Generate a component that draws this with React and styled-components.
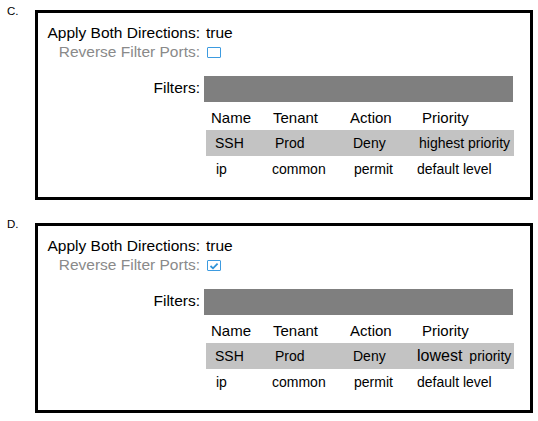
import React from "react";
import styled, { createGlobalStyle } from "styled-components";

const GlobalStyle = createGlobalStyle`
  body {
    margin: 0;
    background: #fff;
    font-family: "Liberation Sans", Arial, sans-serif;
    color: #000;
  }
`;

const options = [
  {
    letter: "C.",
    checked: false,
    rows: [
      { bg: "#c3c3c3", cells: [["SSH", 9], ["Prod", 7], ["Deny", 8], ["highest priority", 7]] },
      { bg: "transparent", cells: [["ip", 10], ["common", 4], ["permit", 9], ["default level", 5]] },
    ],
  },
  {
    letter: "D.",
    checked: true,
    rows: [
      { bg: "#c3c3c3", cells: [["SSH", 9], ["Prod", 7], ["Deny", 8], ["lowest", 5]] },
      { bg: "transparent", cells: [["ip", 10], ["common", 4], ["permit", 9], ["default level", 5]] },
    ],
  },
];

const headers = [
  ["Name", 5],
  ["Tenant", 5],
  ["Action", 5],
  ["Priority", 10],
];

function Checkbox({ checked }) {
  return (
    <CheckBoxStyle>
      {checked && (
        <svg width="10" height="8" viewBox="0 0 10 8">
          <path d="M1.5 4 L4 6.3 L8.6 1.6" fill="none" stroke="#2f93d8" strokeWidth="1.8" />
        </svg>
      )}
    </CheckBoxStyle>
  );
}

function PriorityText({ text }) {
  if (text === "lowest") {
    return (
      <>
        <Big>lowest</Big>priority
      </>
    );
  }
  return text;
}

function Option({ option }) {
  return (
    <Section>
      <Letter>{option.letter}</Letter>
      <Box>
        <Form>
          <Label>Apply Both Directions:</Label>
          <Value>true</Value>
          <Label $muted>Reverse Filter Ports:</Label>
          <Value>
            <Checkbox checked={option.checked} />
          </Value>
          <FilterLabel>Filters:</FilterLabel>
          <FilterBar />
          <Spacer />
          <Table>
            {headers.map(([text, indent]) => (
              <HeadCell key={text} $indent={indent}>
                {text}
              </HeadCell>
            ))}
            {option.rows.map((row, i) =>
              row.cells.map(([text, indent], j) => (
                <Cell key={`${i}-${j}`} $indent={indent} $bg={row.bg}>
                  <PriorityText text={text} />
                </Cell>
              ))
            )}
          </Table>
        </Form>
      </Box>
    </Section>
  );
}

export default function App() {
  return (
    <Page>
      <GlobalStyle />
      {options.map((o) => (
        <Option key={o.letter} option={o} />
      ))}
    </Page>
  );
}

const Page = styled.div`
  padding-top: 5px;
  display: flex;
  flex-direction: column;
  gap: 18px;
`;

const Section = styled.div`
  display: flex;
  align-items: flex-start;
`;

const Letter = styled.div`
  width: 35px;
  box-sizing: border-box;
  padding-left: 7px;
  font-size: 11.5px;
  line-height: 12px;
`;

const Box = styled.div`
  margin-top: 5px;
  width: 498px;
  box-sizing: border-box;
  border: 3px solid #000;
  padding: 10px 0 15px 7px;
`;

const Form = styled.div`
  display: grid;
  grid-template-columns: 155px 1fr;
  column-gap: 4px;
  font-size: 15.5px;
`;

const Label = styled.div`
  justify-self: end;
  line-height: 19px;
  white-space: nowrap;
  color: ${(p) => (p.$muted ? "#8a8a8a" : "#000")};
`;

const Value = styled.div`
  display: flex;
  align-items: center;
  line-height: 19px;
  padding-left: 2px;
`;

const CheckBoxStyle = styled.span`
  display: flex;
  align-items: center;
  justify-content: center;
  width: 14px;
  height: 11px;
  margin-left: 1px;
  margin-top: 2px;
  box-sizing: border-box;
  border: 1.5px solid #3d9be0;
  border-radius: 1px;
  background: #fff;
`;

const FilterLabel = styled(Label)`
  align-self: center;
  margin-top: 14px;
  padding-bottom: 2px;
`;

const FilterBar = styled.div`
  margin-top: 15px;
  width: 309px;
  height: 26px;
  background: #7f7f7f;
`;

const Spacer = styled.div``;

const Table = styled.div`
  display: grid;
  grid-template-columns: 62px 77px 67px 102px;
  margin-left: 2px;
`;

const HeadCell = styled.div`
  height: 28px;
  display: flex;
  align-items: center;
  padding: 3px 0 0 ${(p) => p.$indent}px;
  box-sizing: border-box;
  font-size: 15px;
  white-space: nowrap;
`;

const Cell = styled.div`
  height: 26px;
  display: flex;
  align-items: center;
  padding-left: ${(p) => p.$indent}px;
  box-sizing: border-box;
  font-size: 14px;
  white-space: nowrap;
  background: ${(p) => p.$bg};
`;

const Big = styled.span`
  font-size: 16px;
  margin-right: 7px;
`;
